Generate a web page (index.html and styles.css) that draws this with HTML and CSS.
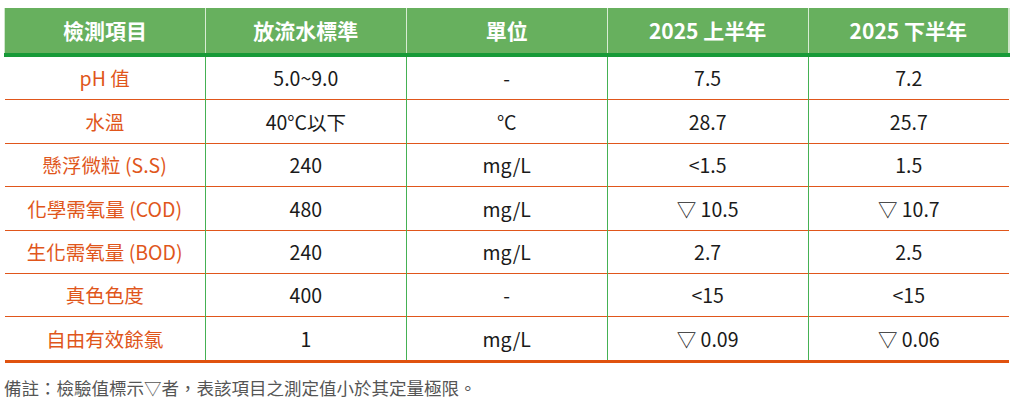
FILE: index.html
```html
<!DOCTYPE html>
<html lang="zh-Hant">
<head>
<meta charset="utf-8">
<link rel="stylesheet" href="styles.css">
</head>
<body>
<div class="page">
<table class="data">
  <thead>
    <tr><th>檢測項目</th><th>放流水標準</th><th>單位</th><th>2025 上半年</th><th>2025 下半年</th></tr>
  </thead>
  <tbody>
    <tr><td class="item">pH 值</td><td>5.0~9.0</td><td>-</td><td>7.5</td><td>7.2</td></tr>
    <tr><td class="item">水溫</td><td>40°C以下</td><td>°C</td><td>28.7</td><td>25.7</td></tr>
    <tr><td class="item">懸浮微粒 (S.S)</td><td>240</td><td>mg/L</td><td>&lt;1.5</td><td>1.5</td></tr>
    <tr><td class="item">化學需氧量 (COD)</td><td>480</td><td>mg/L</td><td>▽ 10.5</td><td>▽ 10.7</td></tr>
    <tr><td class="item">生化需氧量 (BOD)</td><td>240</td><td>mg/L</td><td>2.7</td><td>2.5</td></tr>
    <tr><td class="item">真色色度</td><td>400</td><td>-</td><td>&lt;15</td><td>&lt;15</td></tr>
    <tr><td class="item">自由有效餘氯</td><td>1</td><td>mg/L</td><td>▽ 0.09</td><td>▽ 0.06</td></tr>
  </tbody>
</table>
<p class="note">備註：檢驗值標示▽者，表該項目之測定值小於其定量極限。</p>
</div>
</body>
</html>
```
FILE: styles.css
```css
html, body {
  margin: 0;
  padding: 0;
  background: #ffffff;
}
body {
  font-family: "Noto Sans CJK TC", "Noto Sans", "Liberation Sans", sans-serif;
  color: #1a1a1a;
}
.page {
  padding: 8px 3px 0 4px;
}
.data {
  width: 1006px;
  border-collapse: collapse;
  table-layout: fixed;
  border-bottom: 3px solid #e0520f;
}
.data th {
  background: #67b05e;
  color: #ffffff;
  font-weight: 700;
  font-size: 21px;
  height: 45px;
  padding: 0;
  text-align: center;
  border-left: 1px solid #d8ecd4;
  border-bottom: 4px solid #179a38;
  line-height: 1;
}
.data th:first-child {
  border-left: 1px solid #cfe6cb;
}
.data th:last-child {
  border-right: 2px solid #cfe6cb;
}
.data td {
  height: 42.4px;
  padding: 0;
  text-align: center;
  font-size: 19.5px;
  line-height: 1;
  border-top: 1px solid #e0561b;
  border-left: 1px solid #45b153;
}
.data td:first-child {
  border-left: none;
}
.data tbody tr:first-child td {
  border-top: none;
}
.data td.item {
  color: #e0561b;
}
.note {
  margin: 12px 0 0 0;
  font-size: 17.5px;
  color: #555555;
}
```
